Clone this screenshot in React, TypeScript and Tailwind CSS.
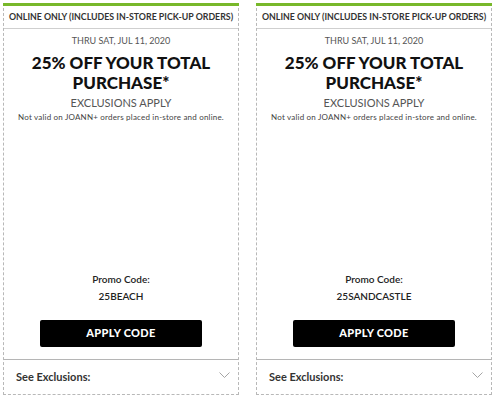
const coupons = [
  { code: '25BEACH' },
  { code: '25SANDCASTLE' },
];

function Chevron() {
  return (
    <svg width="11" height="6" viewBox="0 0 11 6" fill="none" stroke="#a5a5a5" strokeWidth="1">
      <path d="M0.5 0.5 L5.5 5.5 L10.5 0.5" />
    </svg>
  );
}

function Coupon({ code }: { code: string }) {
  return (
    <div className="flex h-[392px] w-[236px] flex-col border border-dashed border-t-0 border-[#b8b8b8]">
      <div className="-mx-px h-[3px] bg-[#78b82a]" />
      <div className="flex h-[23px] items-center justify-center whitespace-nowrap border-b border-[#cfcfcf] text-[8.8px] font-bold text-[#333]">
        ONLINE ONLY (INCLUDES IN-STORE PICK-UP ORDERS)
      </div>
      <div className="flex flex-col items-center text-center">
        <p className="mt-[6px] text-[9px] leading-[12px] text-[#555]">THRU SAT, JUL 11, 2020</p>
        <h2 className="mt-[6px] text-[17px] font-black leading-[20px] text-[#111]">
          25% OFF YOUR TOTAL
          <br />
          PURCHASE*
        </h2>
        <p className="mt-[3px] text-[11px] leading-[14px] text-[#555]">EXCLUSIONS APPLY</p>
        <p className="mt-[1px] text-[8px] leading-[12px] tracking-[0.2px] text-[#444]">
          Not valid on JOANN+ orders placed in-store and online.
        </p>
      </div>
      <div className="flex-1" />
      <div className="flex flex-col items-center">
        <p className="text-[10px] font-semibold leading-[12px] text-[#222]">Promo Code:</p>
        <p className="mt-[5px] text-[10px] font-semibold leading-[12px] text-[#222]">{code}</p>
        <button className="mt-[18px] h-[27px] w-[162px] rounded-[2px] bg-black text-[11px] font-black tracking-[0.3px] text-white">
          APPLY CODE
        </button>
      </div>
      <div className="mt-[12px] flex h-[35px] items-center justify-between border-t border-[#b5b5b5] pl-[12px] pr-[8px]">
        <span className="text-[11px] font-bold text-[#333]">See Exclusions:</span>
        <span className="mb-[5px]">
          <Chevron />
        </span>
      </div>
    </div>
  );
}

export default function App() {
  return (
    <div
      className="flex h-[400px] w-[494px] gap-[17px] bg-white pl-[3px] pt-[3px]"
      style={{ fontFamily: 'Lato, "Liberation Sans", sans-serif' }}
    >
      {coupons.map((c) => (
        <Coupon key={c.code} code={c.code} />
      ))}
    </div>
  );
}
